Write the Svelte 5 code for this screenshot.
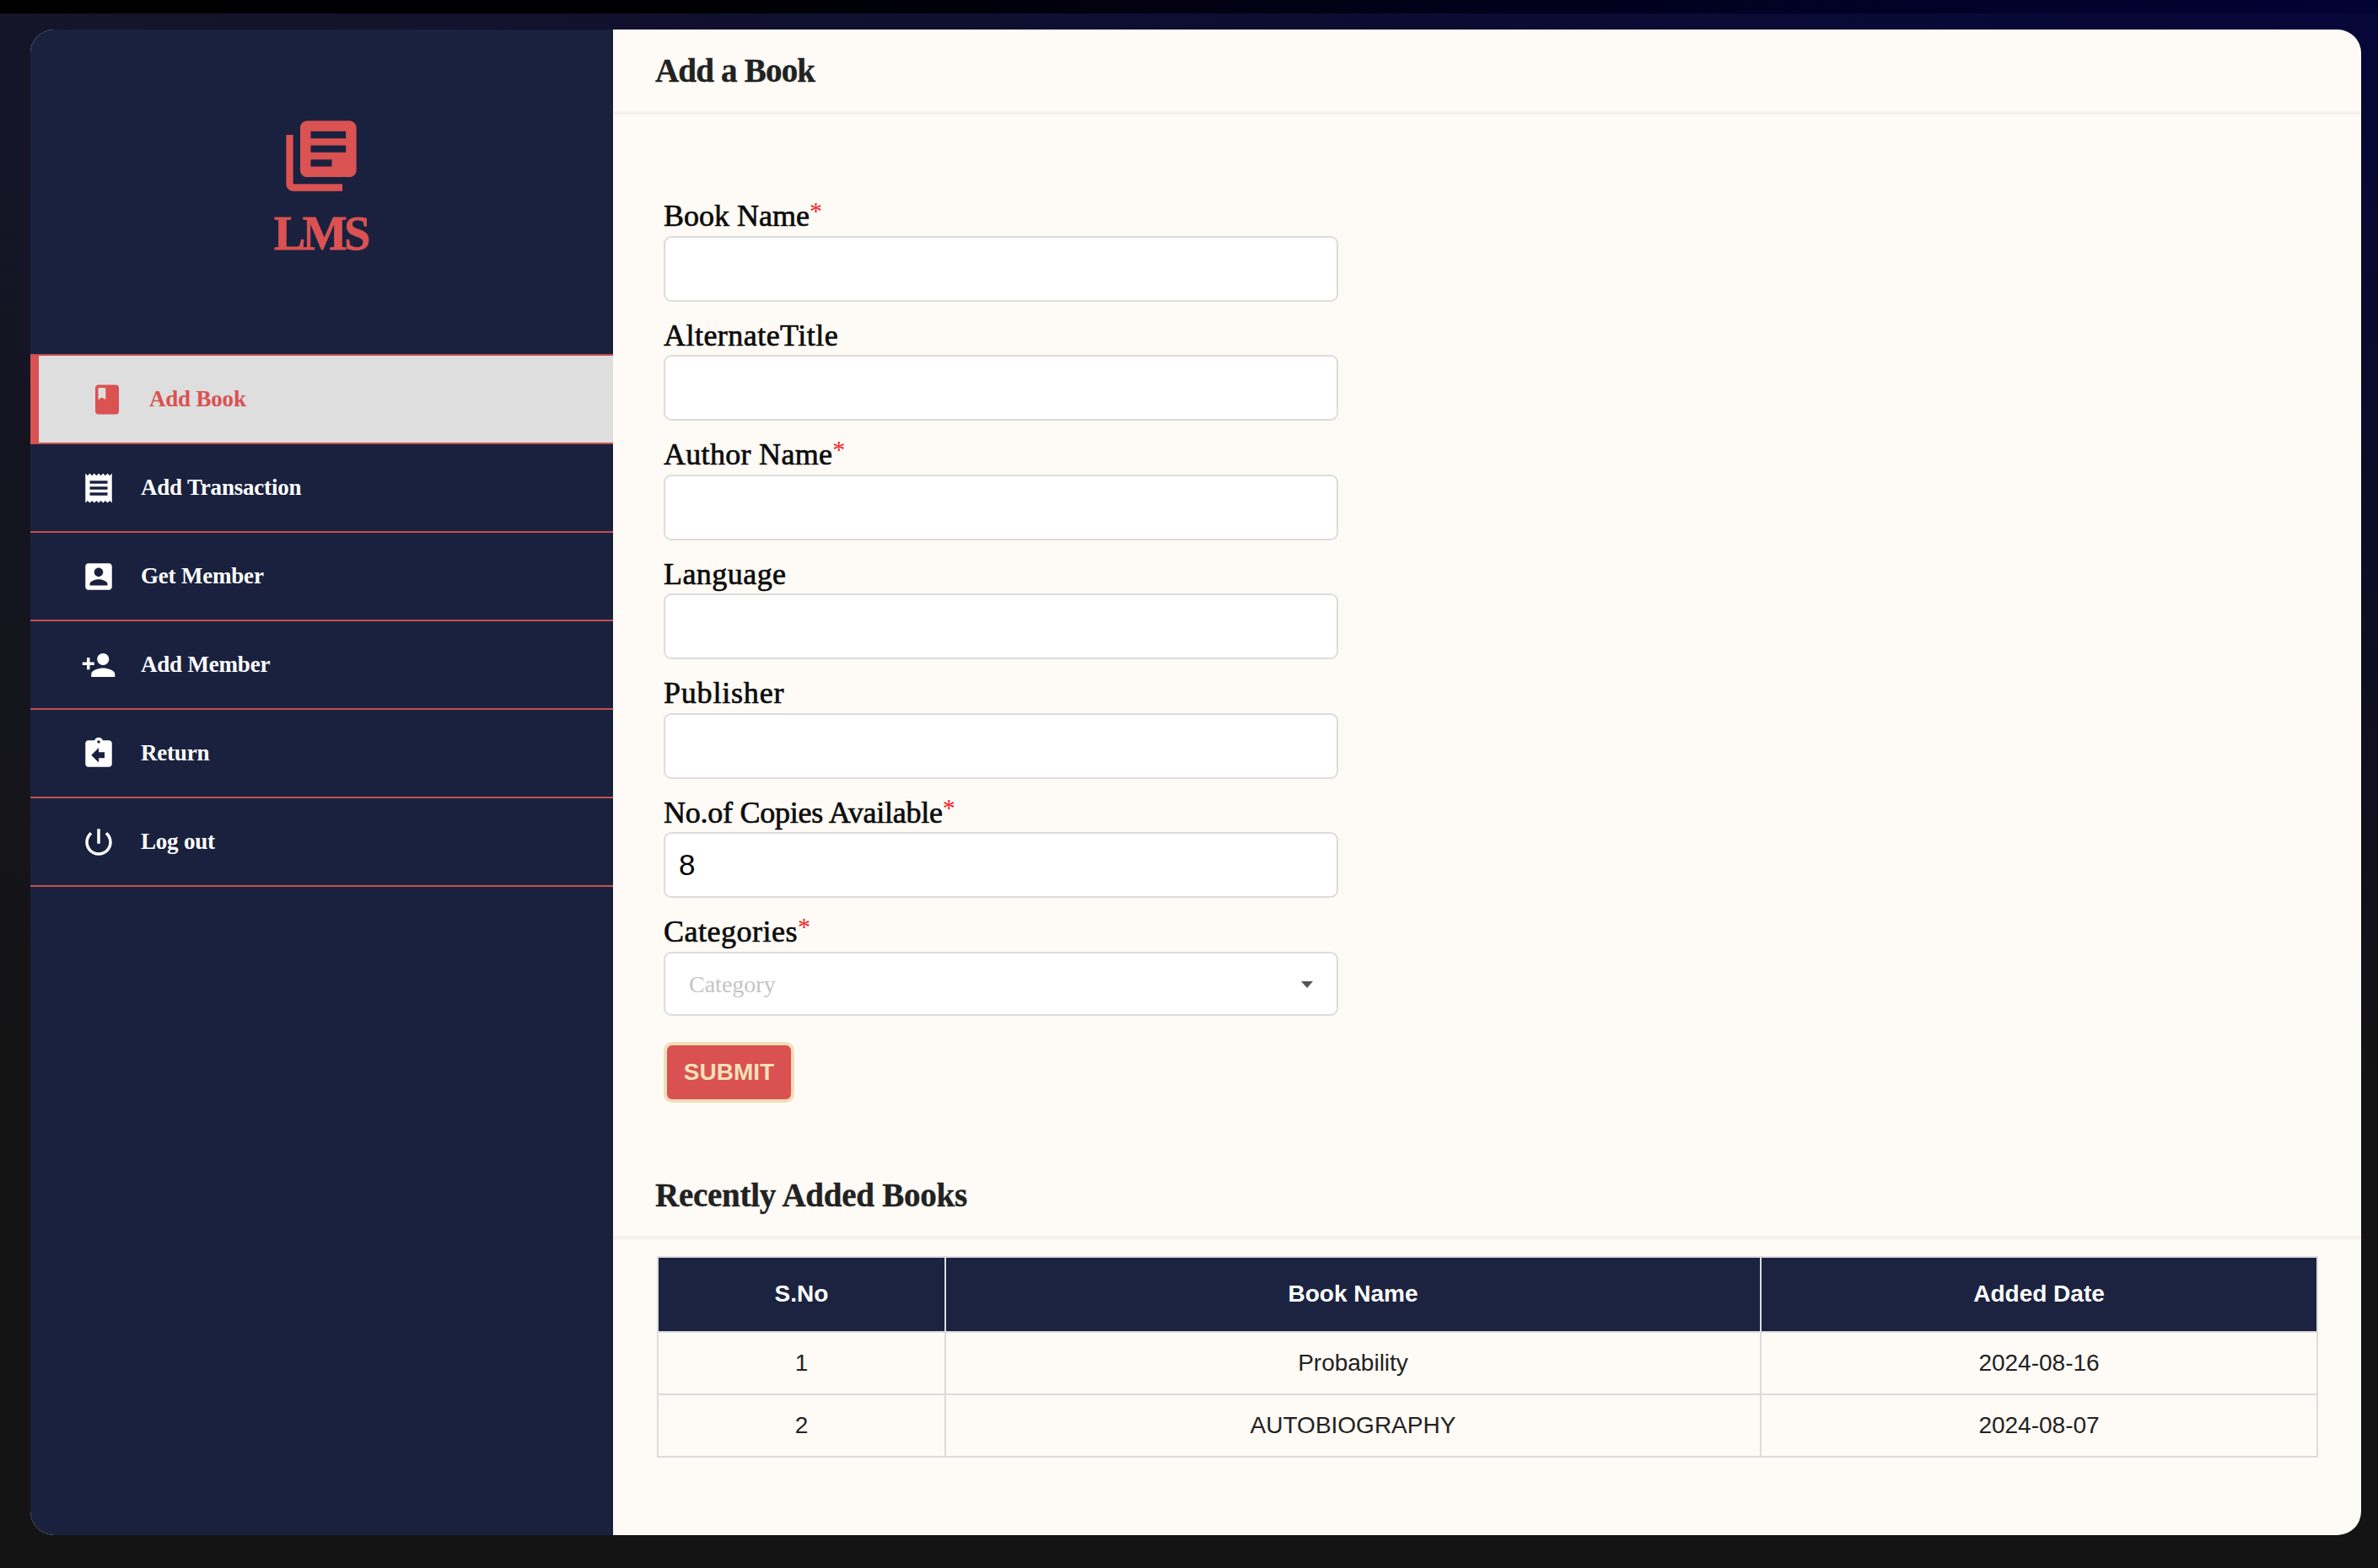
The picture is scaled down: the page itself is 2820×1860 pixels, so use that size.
<script>
  const navItems = [
    { label: 'Add Book', active: true, d: 'M18 2H6c-1.1 0-2 .9-2 2v16c0 1.1.9 2 2 2h12c1.1 0 2-.9 2-2V4c0-1.1-.9-2-2-2zM6 4h5v8l-2.5-1.5L6 12V4z' },
    { label: 'Add Transaction', d: 'M18 17H6v-2h12v2zm0-4H6v-2h12v2zm0-4H6V7h12v2zM3 22l1.5-1.5L6 22l1.5-1.5L9 22l1.5-1.5L12 22l1.5-1.5L15 22l1.5-1.5L18 22l1.5-1.5L21 22V2l-1.5 1.5L18 2l-1.5 1.5L15 2l-1.5 1.5L12 2l-1.5 1.5L9 2 7.5 3.5 6 2 4.5 3.5 3 2v20z' },
    { label: 'Get Member', d: 'M3 5v14c0 1.1.89 2 2 2h14c1.1 0 2-.9 2-2V5c0-1.1-.9-2-2-2H5c-1.11 0-2 .9-2 2zm12 4c0 1.66-1.34 3-3 3s-3-1.34-3-3 1.34-3 3-3 3 1.34 3 3zm-9 8c0-2 4-3.1 6-3.1s6 1.1 6 3.1v1H6v-1z' },
    { label: 'Add Member', d: 'M15 12c2.21 0 4-1.79 4-4s-1.79-4-4-4-4 1.79-4 4 1.79 4 4 4zm-9-2V7H4v3H1v2h3v3h2v-3h3v-2H6zm9 4c-2.67 0-8 1.34-8 4v2h16v-2c0-2.66-5.33-4-8-4z' },
    { label: 'Return', d: 'M19 3h-4.18C14.4 1.84 13.3 1 12 1c-1.3 0-2.4.84-2.82 2H5c-1.1 0-2 .9-2 2v14c0 1.1.9 2 2 2h14c1.1 0 2-.9 2-2V5c0-1.1-.9-2-2-2zm-7 0c.55 0 1 .45 1 1s-.45 1-1 1-1-.45-1-1 .45-1 1-1zm4 12h-4v3l-5-5 5-5v3h4v4z' },
    { label: 'Log out', d: 'M13 3h-2v10h2V3zm4.83 2.17l-1.42 1.42C17.99 7.86 19 9.81 19 12c0 3.87-3.13 7-7 7s-7-3.13-7-7c0-2.19 1.01-4.14 2.58-5.42L6.17 5.17C4.23 6.82 3 9.26 3 12c0 4.97 4.03 9 9 9s9-4.03 9-9c0-2.74-1.23-5.18-3.17-6.83z' }
  ];
  const fields = [
    { label: 'Book Name', required: true, value: '' },
    { label: 'AlternateTitle', cls: 'alt', value: '' },
    { label: 'Author Name', required: true, cls: 'author', value: '' },
    { label: 'Language', cls: 'lang', value: '' },
    { label: 'Publisher', cls: 'pub', value: '' },
    { label: 'No.of Copies Available', required: true, cls: 'copies', value: '8' }
  ];
  const books = [
    { no: 1, name: 'Probability', date: '2024-08-16' },
    { no: 2, name: 'AUTOBIOGRAPHY', date: '2024-08-07' }
  ];
</script>

<div class="page">
  <div class="strip"></div>
  <div class="window">
    <aside class="sidebar">
      <div class="brand">
        <svg class="logo" viewBox="0 0 24 24" aria-hidden="true"><path d="M4 6H2v14c0 1.1.9 2 2 2h14v-2H4V6zm16-4H8c-1.1 0-2 .9-2 2v12c0 1.1.9 2 2 2h12c1.1 0 2-.9 2-2V4c0-1.1-.9-2-2-2zm-1 9H9V9h10v2zm-4 4H9v-2h6v2zm4-8H9V5h10v2z" /></svg>
        <div class="brand-name">LMS</div>
      </div>
      <nav class="nav">
        {#each navItems as item}
          <div class="nav-item" class:active={item.active}>
            <svg class="nav-icon" viewBox="0 0 24 24" aria-hidden="true"><path d={item.d} /></svg>
            <span>{item.label}</span>
          </div>
        {/each}
      </nav>
    </aside>
    <main class="content">
      <header class="section-head"><h2>Add a Book</h2></header>
      <form class="form">
        {#each fields as f}
          <div class="field">
            <label class={f.cls}>{f.label}{#if f.required}<span class="req">*</span>{/if}</label>
            <input type="text" value={f.value} />
          </div>
        {/each}
        <div class="field">
          <label class="cat">Categories<span class="req">*</span></label>
          <div class="select"><span>Category</span><i class="caret"></i></div>
        </div>
        <button type="button" class="submit">SUBMIT</button>
      </form>
      <header class="section-head recent"><h2>Recently Added Books</h2></header>
      <div class="table-wrap">
        <table>
          <thead>
            <tr><th class="c1">S.No</th><th class="c2">Book Name</th><th>Added Date</th></tr>
          </thead>
          <tbody>
            {#each books as b}
              <tr><td>{b.no}</td><td>{b.name}</td><td>{b.date}</td></tr>
            {/each}
          </tbody>
        </table>
      </div>
    </main>
  </div>
</div>

<style>
  :global(body) {
    margin: 0;
    background: #141414;
  }
  .page {
    width: 2820px;
    height: 1860px;
    overflow: hidden;
    background:
      linear-gradient(180deg, rgba(20, 20, 20, 0) 0, #141414 1300px),
      linear-gradient(90deg, #15152a 0, #06063a 100%);
  }
  .strip {
    height: 16px;
    background: linear-gradient(90deg, #000 0, #000 25%, #020235 100%);
  }
  .window {
    display: flex;
    margin: 19px 20px 0 36px;
    height: 1786px;
    border-radius: 28px;
    overflow: hidden;
    background: #fefbf6;
  }
  .sidebar {
    flex: 0 0 691px;
    background: #1a213e;
  }
  .brand {
    display: flex;
    flex-direction: column;
    align-items: center;
    height: 385px;
    padding: 100px 2px 0 0;
    box-sizing: border-box;
  }
  .logo {
    width: 100px;
    height: 100px;
    fill: #da5252;
  }
  .brand-name {
    margin: 6px 0 0;
    font: 700 56px/72px "Liberation Serif", serif;
    letter-spacing: -3.4px;
    color: #da5252;
    -webkit-text-stroke: 0.9px #da5252;
  }
  .nav {
    border-top: 2px solid #c4504f;
  }
  .nav-item {
    display: flex;
    align-items: center;
    gap: 29px;
    height: 105px;
    box-sizing: border-box;
    padding-left: 60px;
    border-bottom: 2px solid #c4504f;
    color: #fff;
    font: 700 27px "Liberation Serif", serif;
    letter-spacing: -0.2px;
  }
  .nav-item.active {
    border-left: 10px solid #da5252;
    background: #dedede;
    color: #da5252;
  }
  .nav-icon {
    width: 42px;
    height: 42px;
    flex: none;
    fill: currentColor;
  }
  .content {
    flex: 1;
    min-width: 0;
  }
  .section-head {
    display: flex;
    align-items: center;
    height: 101px;
    box-sizing: border-box;
    padding-left: 50px;
    border-bottom: 4px solid #f4f0ef;
  }
  .section-head h2 {
    margin: 0;
    font: 700 39px "Liberation Serif", serif;
    letter-spacing: -0.8px;
    color: #222;
    -webkit-text-stroke: 0.4px #222;
  }
  .section-head.recent h2 {
    letter-spacing: -0.25px;
  }
  .form {
    width: 800px;
    padding: 80px 0 0 60px;
  }
  .field {
    display: flex;
    flex-direction: column;
  }
  label {
    height: 63.45px;
    box-sizing: border-box;
    padding-top: 17px;
    font: 400 36px/46px "Liberation Serif", serif;
    color: #0c0c0c;
    -webkit-text-stroke: 0.7px #0c0c0c;
  }
  .field:first-child label {
    height: 64px;
  }
  label.alt {
    letter-spacing: 0.46px;
  }
  label.author {
    letter-spacing: 0.3px;
  }
  label.lang {
    letter-spacing: 0.45px;
  }
  label.pub {
    letter-spacing: 0.8px;
  }
  label.copies {
    letter-spacing: -0.25px;
  }
  label.cat {
    letter-spacing: 0.5px;
  }
  .req {
    position: relative;
    top: -8px;
    font-size: 30px;
    color: #f5222d;
    -webkit-text-stroke: 0;
  }
  input {
    display: block;
    width: 100%;
    height: 78px;
    box-sizing: border-box;
    padding: 0 16px;
    border: 2px solid #dcdcdc;
    border-radius: 9px;
    background: #fff;
    font: 400 35px "Liberation Sans", sans-serif;
    color: #000;
    outline: none;
  }
  .select {
    display: flex;
    align-items: center;
    justify-content: space-between;
    height: 76px;
    box-sizing: border-box;
    padding: 2px 28px 0 28px;
    border: 2px solid #dcdcdc;
    border-radius: 9px;
    background: #fff;
    font: 400 28px "Liberation Serif", serif;
    color: #c4c4c4;
  }
  .caret {
    width: 0;
    height: 0;
    border-left: 7px solid transparent;
    border-right: 7px solid transparent;
    border-top: 8px solid #555;
  }
  .submit {
    display: block;
    width: 155px;
    height: 72px;
    margin-top: 31px;
    padding: 0;
    border: 4px solid #f0dfb8;
    border-radius: 10px;
    background: #d95151;
    font: 700 28px "Liberation Sans", sans-serif;
    color: #f4e0b9;
  }
  .recent {
    margin-top: 61px;
  }
  .table-wrap {
    padding: 20px 51px 0 52px;
  }
  table {
    width: 100%;
    table-layout: fixed;
    border-collapse: collapse;
    font: 400 28px "Liberation Sans", sans-serif;
    color: #222;
    text-align: center;
  }
  th, td {
    padding: 0;
    border: 2px solid #dcdcdc;
  }
  th {
    height: 87px;
    background: #1b2340;
    color: #fff;
    font-weight: 700;
  }
  td {
    height: 72px;
  }
  .c1 {
    width: 339px;
  }
  .c2 {
    width: 965px;
  }
</style>
